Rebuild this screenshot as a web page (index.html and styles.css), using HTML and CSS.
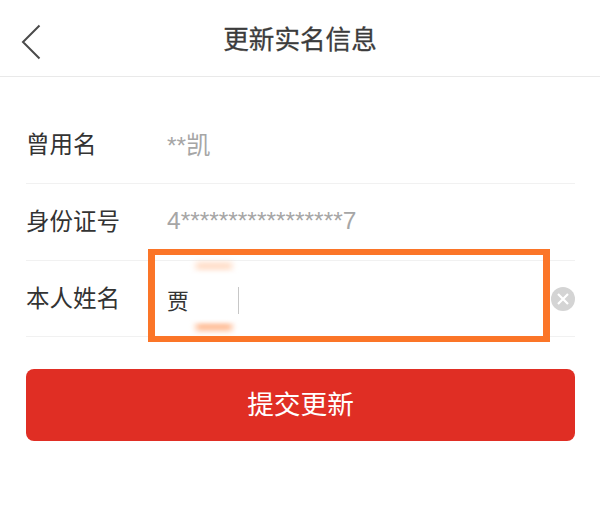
FILE: index.html
```html
<!DOCTYPE html>
<html lang="zh-CN">
<head>
    <meta charset="UTF-8">
    <meta name="viewport" content="width=device-width, initial-scale=1.0">
    <title>更新实名信息</title>
    <link rel="stylesheet" href="styles.css">
</head>
<body>
    <div class="app">
        <header class="topbar">
            <svg class="back" width="20" height="36" viewBox="0 0 20 36">
                <path d="M18.5 1.5 L2 18 L18.5 34.5" fill="none" stroke="#4a4a4a" stroke-width="2"/>
            </svg>
            <h1>更新实名信息</h1>
        </header>

        <div class="form">
            <div class="row">
                <span class="label">曾用名</span>
                <span class="value">**凯</span>
            </div>
            <div class="row">
                <span class="label">身份证号</span>
                <span class="value">4*****************7</span>
            </div>
            <div class="row">
                <span class="label">本人姓名</span>
                <span class="input-text">贾</span>
                <span class="caret"></span>
                <svg class="clear" width="24" height="24" viewBox="0 0 24 24">
                    <circle cx="12" cy="12" r="12" fill="#d4d4d4"/>
                    <path d="M7 7 L17 17 M17 7 L7 17" stroke="#fff" stroke-width="2.2"/>
                </svg>
                <!-- mosaic over the name and the orange marker round the field -->
                <div class="smudge-tint smudge-top"></div>
                <div class="smudge-tint smudge-bottom"></div>
                <div class="smudge"></div>
                <div class="marker"></div>
            </div>
            <button class="submit">提交更新</button>
        </div>
    </div>
</body>
</html>
```

FILE: styles.css
```css
* {
    margin: 0;
    padding: 0;
    box-sizing: border-box;
    font-family: "Liberation Sans", "Noto Sans CJK SC", sans-serif;
}

body {
    background: #fff;
    overflow: hidden;
}

.app {
    width: 600px;
    height: 520px;
}

.topbar {
    height: 77px;
    border-bottom: 1px solid #e9e9e9;
    display: flex;
    align-items: center;
    justify-content: center;
    position: relative;
}

.back {
    position: absolute;
    left: 21px;
    top: 24px;
}

h1 {
    font-size: 25.6px;
    font-weight: 400;
    color: #3c3c3c;
    padding-bottom: 2px;
    -webkit-text-stroke: 0.3px #3c3c3c;
}

.form {
    padding: 30px 25px 0 26px;
}

.row {
    height: 77px;
    display: flex;
    align-items: center;
    border-bottom: 1px solid #f1f1f1;
    position: relative;
}

.row:last-of-type {
    height: 76px;
}

.label {
    width: 141px;
    font-size: 23.5px;
    color: #333;
    padding-bottom: 4px;
}

.value {
    font-size: 24.5px;
    color: #a6a6a6;
    padding-bottom: 3px;
}

.input-text {
    font-size: 22px;
    color: #333;
}

.caret {
    width: 1px;
    height: 27px;
    margin-top: 4px;
    margin-left: 49px;
    background: #b4b4b4;
}

.clear {
    position: absolute;
    right: 0;
    top: 26px;
}

.smudge {
    position: absolute;
    left: 164px;
    top: 13px;
    width: 47px;
    height: 47px;
    background: #fff;
    filter: blur(2px);
}

.smudge-tint {
    position: absolute;
    left: 170px;
    width: 36px;
    height: 6px;
    background: #ffd2b5;
    filter: blur(3px);
}

.smudge-top {
    top: 2px;
}

.smudge-bottom {
    top: 63px;
    background: #ffa672;
}

.marker {
    position: absolute;
    left: 122px;
    top: -12px;
    width: 402px;
    height: 93px;
    border: 7px solid #fb7528;
    border-top-width: 6px;
    border-bottom-width: 6px;
}

.submit {
    display: block;
    width: 549px;
    height: 72px;
    margin-top: 32px;
    padding-bottom: 5px;
    border: none;
    border-radius: 8px;
    background: #e02e24;
    color: #fff;
    font-size: 26.7px;
}
```
